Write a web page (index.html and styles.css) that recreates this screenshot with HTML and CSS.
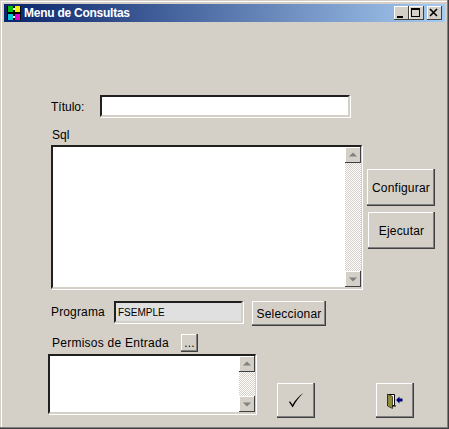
FILE: index.html
```html
<!DOCTYPE html>
<html lang="es">
<head>
  <meta charset="UTF-8">
  <meta name="viewport" content="width=device-width, initial-scale=1.0">
  <title>Menu de Consultas</title>
  <link rel="stylesheet" href="styles.css">
</head>
<body>
  <div class="window">
    <div class="titlebar">
      <svg class="app-icon" width="16" height="16" viewBox="0 0 16 16">
        <rect x="1" y="1" width="14" height="14" fill="#000"/>
        <rect x="2" y="1" width="5" height="6" fill="#00c000"/>
        <rect x="9" y="1" width="5" height="6" fill="#f0f000"/>
        <rect x="2" y="9" width="5" height="6" fill="#00c8d8"/>
        <rect x="9" y="9" width="5" height="6" fill="#e000d0"/>
        <rect x="7" y="3" width="2" height="2" fill="#fff"/>
        <rect x="7" y="11" width="2" height="2" fill="#fff"/>
      </svg>
      <span class="title-text">Menu de Consultas</span>
      <div class="caption-buttons">
        <button class="caption-btn">
          <svg width="14" height="14" viewBox="0 0 14 14"><rect x="3" y="10" width="6" height="2" fill="#000"/></svg>
        </button>
        <button class="caption-btn">
          <svg width="14" height="14" viewBox="0 0 14 14"><path d="M2 2h9v9H2z M3 4v6h7V4z" fill="#000" fill-rule="evenodd"/></svg>
        </button>
        <button class="caption-btn close-btn">
          <svg width="14" height="14" viewBox="0 0 14 14"><path d="M3 3l7 7M10 3l-7 7" stroke="#000" stroke-width="1.6" fill="none"/></svg>
        </button>
      </div>
    </div>

    <div class="form">
      <div class="row row-titulo">
        <label class="label label-titulo">Título:</label>
        <div class="field field-titulo"></div>
      </div>

      <label class="label label-sql">Sql</label>
      <div class="row row-sql">
        <div class="listbox listbox-sql">
          <div class="scrollbar">
            <span class="scroll-btn"><svg width="14" height="14" viewBox="0 0 14 14"><path d="M7 4.500l4 4H3z" fill="#808080"/></svg></span>
            <span class="scroll-btn"><svg width="14" height="14" viewBox="0 0 14 14"><path d="M7 9.500l4-4H3z" fill="#808080"/></svg></span>
          </div>
        </div>
        <div class="side-buttons">
          <button class="btn btn-config">Configurar</button>
          <button class="btn btn-ejecutar">Ejecutar</button>
        </div>
      </div>

      <div class="row row-programa">
        <label class="label label-programa">Programa</label>
        <div class="field field-programa">FSEMPLE</div>
        <button class="btn btn-seleccionar">Seleccionar</button>
      </div>

      <div class="row row-permisos">
        <label class="label label-permisos">Permisos de Entrada</label>
        <button class="btn btn-dots">...</button>
      </div>

      <div class="row row-bottom">
        <div class="listbox listbox-permisos">
          <div class="scrollbar">
            <span class="scroll-btn"><svg width="14" height="14" viewBox="0 0 14 14"><path d="M7 4.500l4 4H3z" fill="#808080"/></svg></span>
            <span class="scroll-btn"><svg width="14" height="14" viewBox="0 0 14 14"><path d="M7 9.500l4-4H3z" fill="#808080"/></svg></span>
          </div>
        </div>
        <button class="btn btn-icon btn-ok">
          <svg width="16" height="15" viewBox="0 0 16 15"><path d="M1 9l1-.7 2.500 3.500C7 7.500 10.500 3 15.500 0 11 4 7.500 9 4.700 14.500z" fill="#000"/></svg>
        </button>
        <button class="btn btn-icon btn-exit">
          <svg width="18" height="16" viewBox="0 0 18 16">
            <path d="M1.500 1.500h7v11h-7z" fill="#fff" stroke="#000"/>
            <path d="M1.500 1l5 2.500v12l-5-2.500z" fill="#8c8c3c" stroke="#303010" stroke-width=".8"/>
            <path d="M6 13h4" stroke="#000"/>
            <path d="M10 7l3.500-3.500v2h3v3h-3v2z" fill="#000080"/>
          </svg>
        </button>
      </div>
    </div>
  </div>
</body>
</html>
```

FILE: styles.css
```css
* {
  box-sizing: border-box;
}

body {
  margin: 0;
  font-family: "Liberation Sans", Arial, sans-serif;
  font-size: 12px;
  color: #000;
  background: #d4d0c8;
}

.window {
  width: 449px;
  height: 429px;
  padding: 4px;
  background: #d4d0c8;
  box-shadow: inset -1px -1px 0 #404040, inset -2px -2px 0 #808080, inset 1px 1px 0 #d4d0c8, inset 2px 2px 0 #fff;
}

/* barra de titulo */
.titlebar {
  display: flex;
  align-items: center;
  height: 18px;
  padding: 0 3px 0 2px;
  background: linear-gradient(to right, #0a246a, #a6caf0);
}

.app-icon {
  flex: none;
  margin-right: 2px;
}

.title-text {
  color: #fff;
  font-weight: bold;
  font-size: 12px;
  letter-spacing: -.25px;
}

.caption-buttons {
  display: flex;
  margin-left: auto;
}

.caption-btn {
  width: 15px;
  height: 14px;
  padding: 0;
  border: 0;
  background: #d4d0c8;
  box-shadow: inset -1px -1px 0 #404040, inset 1px 1px 0 #fff;
}

.caption-btn svg {
  display: block;
}

.close-btn {
  margin-left: 3px;
}

/* formulario */
.form {
  padding: 73px 0 0 47px;
}

.row {
  display: flex;
}

.label {
  display: block;
}

.row-titulo {
  align-items: center;
}

.label-titulo {
  width: 49px;
  padding-top: 2px;
}

.field {
  height: 22px;
  border: 2px solid;
  border-color: #202020 #d4d0c8 #d4d0c8 #202020;
  box-shadow: 1px 1px 0 #fff;
}

.field-titulo {
  width: 250px;
  background: #fff;
}

.label-sql {
  margin: 11px 0 0 1px;
  height: 17px;
  line-height: 14px;
}

.listbox {
  display: flex;
  justify-content: flex-end;
  flex: none;
  background: #fff;
  border: 2px solid;
  border-right-width: 1px;
  border-color: #202020 #d4d0c8 #d4d0c8 #202020;
  box-shadow: 1px 1px 0 #fff;
}

.listbox-sql {
  width: 311px;
  height: 144px;
}

.scrollbar {
  display: flex;
  flex-direction: column;
  justify-content: space-between;
  width: 16px;
  background: repeating-conic-gradient(#fff 0 25%, #d4d0c8 0 50%) 0 0 / 2px 2px;
}

.scroll-btn {
  display: block;
  width: 16px;
  height: 16px;
  padding: 1px;
  background: #d4d0c8;
  box-shadow: inset -1px -1px 0 #404040, inset 1px 1px 0 #fff;
}

.scroll-btn svg {
  display: block;
}

.side-buttons {
  display: flex;
  flex-direction: column;
  align-items: flex-end;
  gap: 6px;
  margin: 24px 0 0 5px;
}

.btn {
  padding: 0;
  border: 0;
  font-family: inherit;
  font-size: 12px;
  letter-spacing: .2px;
  color: #000;
  background: #d4d0c8;
  box-shadow: inset -1px -1px 0 #404040, inset -2px -2px 0 #808080, inset 1px 1px 0 #fff;
}

.btn-config {
  width: 68px;
  height: 37px;
}

.btn-ejecutar {
  width: 67px;
  height: 37px;
}

.row-programa {
  margin-top: 12px;
  align-items: flex-start;
}

.label-programa {
  width: 63px;
  letter-spacing: .15px;
  line-height: 22px;
}

.field-programa {
  width: 129px;
  padding-left: 2px;
  background: #e0e0e0;
  font-size: 10px;
  line-height: 20px;
}

.btn-seleccionar {
  width: 74px;
  height: 25px;
  margin-left: 9px;
}

.row-permisos {
  align-items: flex-start;
  margin-top: 8px;
  height: 18px;
}

.label-permisos {
  width: 129px;
  margin-left: 1px;
  letter-spacing: .25px;
  line-height: 18px;
}

.btn-dots {
  width: 17px;
  height: 18px;
}

.row-bottom {
  margin: 2px 0 0 -3px;
  align-items: flex-start;
}

.listbox-permisos {
  width: 208px;
  height: 60px;
}

.btn-icon {
  display: flex;
  align-items: center;
  justify-content: center;
  width: 38px;
  height: 35px;
  margin-top: 29px;
}

.btn-ok {
  margin-left: 21px;
}

.btn-exit {
  margin-left: 61px;
}
```
